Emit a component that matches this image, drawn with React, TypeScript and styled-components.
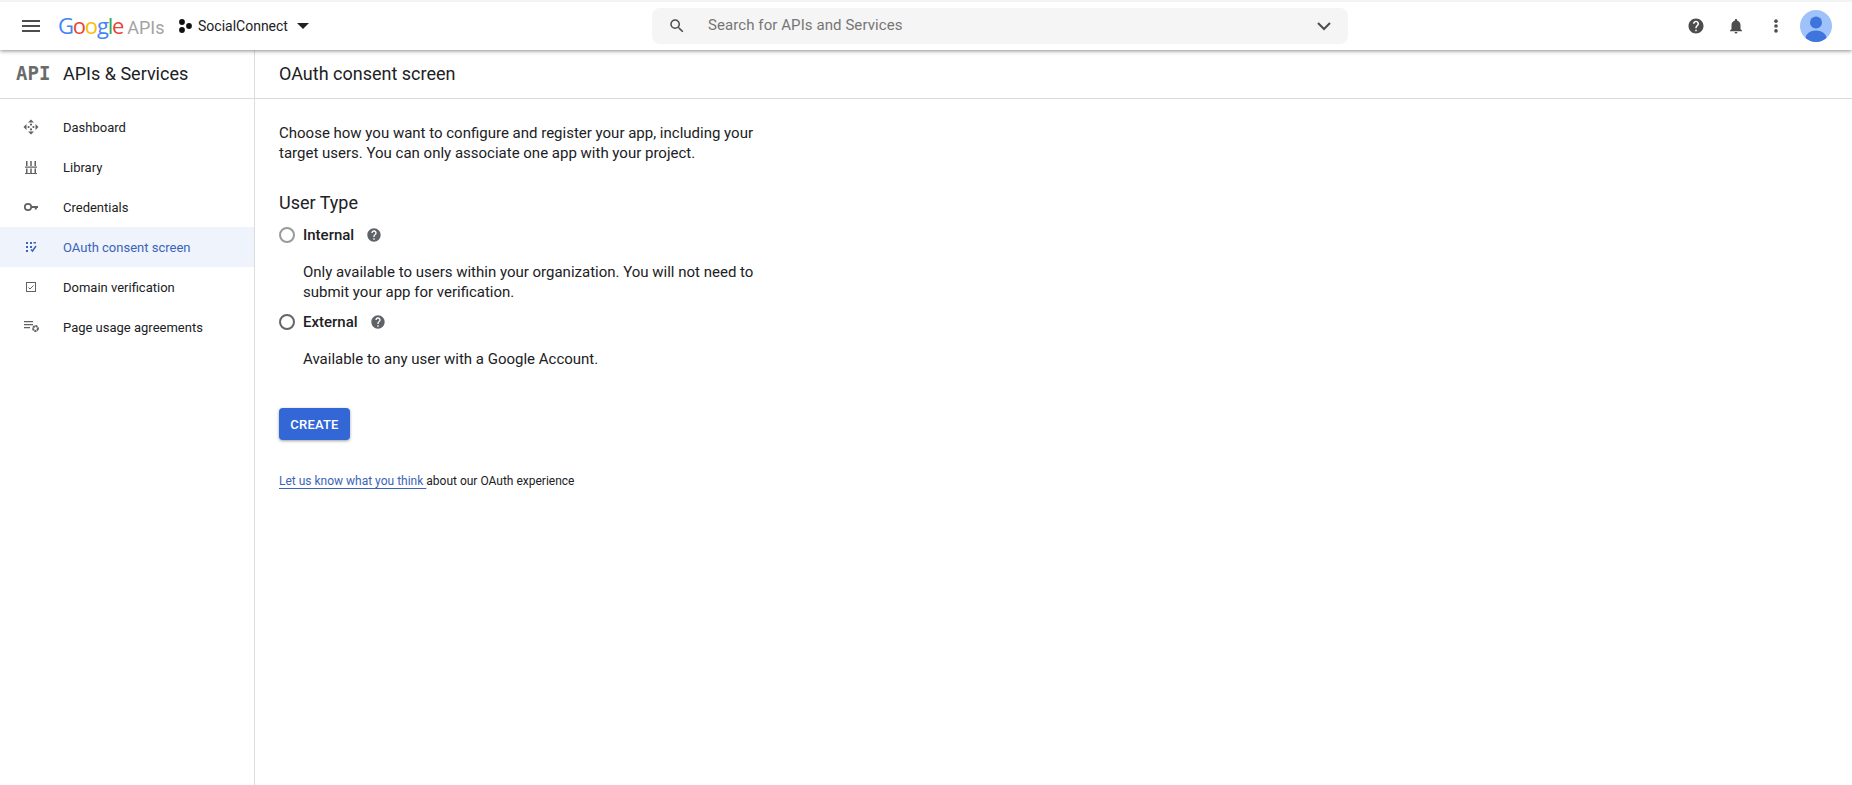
// App.tsx
import styled, { createGlobalStyle } from 'styled-components';

const GlobalStyle = createGlobalStyle`
  html, body {
    margin: 0;
    padding: 0;
    height: 100%;
    background: #fff;
    font-family: Roboto, "Liberation Sans", sans-serif;
    color: #202124;
  }
  #root {
    height: 100%;
  }
`;

const Page = styled.div`
  display: flex;
  flex-direction: column;
  height: 785px;
  overflow: hidden;
`;

const TopBar = styled.header`
  position: relative;
  z-index: 2;
  flex: none;
  display: grid;
  grid-template-columns: 652px 696px 1fr;
  align-items: center;
  height: 48px;
  border-top: 2px solid #f3f3f3;
  background: #fff;
  box-shadow: 0 1px 4px rgba(60, 64, 67, 0.6);
`;

const TopLeft = styled.div`
  display: flex;
  align-items: center;
  padding-left: 22px;
`;

const MenuButton = styled.svg`
  width: 18px;
  height: 12px;
  margin-right: 18px;
  color: #4d4d4d;
`;

const Logo = styled.div`
  display: flex;
  align-items: baseline;
  width: 120px;
  font-family: "Open Sans", Roboto, sans-serif;
  font-size: 22px;
  letter-spacing: -1.2px;
  line-height: 26px;
`;

const LogoLetter = styled.span<{ $color: string }>`
  color: ${({ $color }) => $color};
`;

const LogoApis = styled.span`
  margin-left: 4px;
  font-family: Roboto, sans-serif;
  font-size: 18px;
  letter-spacing: 0;
  color: #a3a3a3;
`;

const ProjectName = styled.span`
  margin-left: 6px;
  font-size: 14px;
  color: #202124;
`;

const Caret = styled.svg`
  width: 12px;
  height: 6px;
  margin-left: 9px;
  color: #202124;
`;

const SearchBox = styled.div`
  display: flex;
  align-items: center;
  height: 36px;
  padding: 0 12px 0 16px;
  border-radius: 8px;
  background: #f5f5f5;
  font-size: 15px;
  letter-spacing: 0.08px;
  color: #757575;
`;

const SearchText = styled.span`
  flex: 1;
  margin-left: 22px;
  padding-bottom: 2px;
`;

const TopRight = styled.div`
  display: flex;
  align-items: center;
  justify-content: flex-end;
  padding-right: 20px;
`;

const IconSlot = styled.span`
  display: flex;
  align-items: center;
  justify-content: center;
  width: 40px;
`;

const Avatar = styled.svg`
  flex: none;
  width: 32px;
  height: 32px;
  margin-left: 4px;
`;

const Body = styled.div`
  flex: 1;
  display: grid;
  grid-template-columns: 255px 1fr;
  min-height: 0;
`;

const Sidebar = styled.aside`
  border-right: 1px solid #dadce0;
`;

const SidebarHead = styled.div`
  box-sizing: border-box;
  display: flex;
  align-items: center;
  height: 49px;
  padding: 0 0 2px 16px;
  border-bottom: 1px solid #dadce0;
  font-size: 18px;
  color: #202124;
`;

const ApiMark = styled.span`
  width: 47px;
  font-family: "DejaVu Sans Mono", "Liberation Mono", monospace;
  font-size: 19px;
  font-weight: 700;
  color: #6b6b6b;
`;

const Nav = styled.nav`
  display: flex;
  flex-direction: column;
  padding-top: 8px;
`;

const NavItem = styled.a<{ $active?: boolean }>`
  display: flex;
  align-items: center;
  height: 40px;
  padding-left: 22px;
  font-size: 13px;
  color: ${({ $active }) => ($active ? '#3b64b8' : '#202124')};
  background: ${({ $active }) => ($active ? '#eef3fc' : 'transparent')};
`;

const NavIcon = styled.svg`
  flex: none;
  width: 18px;
  height: 18px;
  margin-right: 23px;
  color: #616161;
`;

const Main = styled.main`
  display: flex;
  flex-direction: column;
`;

const MainHead = styled.div`
  box-sizing: border-box;
  display: flex;
  align-items: center;
  flex: none;
  height: 49px;
  padding: 0 0 2px 24px;
  font-size: 18px;
  border-bottom: 1px solid #dadce0;
`;

const Content = styled.div`
  width: 480px;
  padding: 24px 0 0 24px;
`;

const Paragraph = styled.p`
  margin: 0;
  font-size: 15px;
  line-height: 20px;
  color: #202124;
`;

const SectionTitle = styled.h2`
  margin: 28px 0 0;
  font-size: 18px;
  font-weight: 400;
  line-height: 24px;
  color: #202124;
`;

const OptionRow = styled.div<{ $gap: number }>`
  display: flex;
  align-items: center;
  height: 24px;
  margin-top: ${({ $gap }) => $gap}px;
`;

const Radio = styled.span<{ $muted?: boolean }>`
  flex: none;
  box-sizing: border-box;
  width: 16px;
  height: 16px;
  margin-right: 8px;
  border: 2px solid ${({ $muted }) => ($muted ? '#9a9a9a' : '#666')};
  border-radius: 50%;
`;

const OptionLabel = styled.span`
  margin-right: 12px;
  font-size: 15px;
  font-weight: 500;
  color: #202124;
`;

const OptionText = styled(Paragraph)`
  margin-top: 15px;
  padding-left: 24px;
`;

const CreateButton = styled.button`
  display: block;
  width: 71px;
  height: 32px;
  margin-top: 39px;
  padding: 0;
  border: none;
  border-radius: 4px;
  background: #3367d6;
  box-shadow: 0 1px 3px rgba(60, 64, 67, 0.5);
  color: #fff;
  font-family: Roboto, sans-serif;
  font-size: 13px;
  font-weight: 500;
  letter-spacing: 0.2px;
`;

const Feedback = styled.p`
  margin: 33px 0 0;
  font-size: 12px;
  line-height: 16px;
  color: #202124;
`;

const FeedbackLink = styled.a`
  color: #3b64b8;
  text-decoration: underline;
  text-underline-offset: 3px;
`;

const Icon = styled.svg<{ $size: number; $color?: string }>`
  flex: none;
  display: block;
  width: ${({ $size }) => $size}px;
  height: ${({ $size }) => $size}px;
  color: ${({ $color }) => $color ?? '#5f6368'};
`;

const HelpIcon = ({ size, color }: { size: number; color?: string }) => (
  <Icon $size={size} $color={color} viewBox="0 0 24 24" fill="currentColor">
    <path d="M12 2C6.48 2 2 6.48 2 12s4.48 10 10 10 10-4.48 10-10S17.52 2 12 2zm1 17h-2v-2h2v2zm2.07-7.75l-.9.92C13.45 12.9 13 13.5 13 15h-2v-.5c0-1.1.45-2.1 1.17-2.83l1.24-1.26c.37-.36.59-.86.59-1.41 0-1.1-.9-2-2-2s-2 .9-2 2H8c0-2.21 1.79-4 4-4s4 1.79 4 4c0 .88-.36 1.68-.93 2.25z" />
  </Icon>
);

const LOGO_LETTERS: [string, string][] = [
  ['G', '#4285f4'],
  ['o', '#ea4335'],
  ['o', '#fbbc05'],
  ['g', '#4285f4'],
  ['l', '#34a853'],
  ['e', '#ea4335'],
];

const App = () => {
  return (
    <Page>
      <GlobalStyle />
      <TopBar>
        <TopLeft>
          <MenuButton viewBox="0 0 18 12" fill="currentColor">
            <rect width="18" height="2" />
            <rect y="5" width="18" height="2" />
            <rect y="10" width="18" height="2" />
          </MenuButton>
          <Logo>
            {LOGO_LETTERS.map(([letter, color], i) => (
              <LogoLetter key={i} $color={color}>{letter}</LogoLetter>
            ))}
            <LogoApis>APIs</LogoApis>
          </Logo>
          <Icon $size={14} $color="#111" viewBox="0 0 14 14" fill="currentColor">
            <circle cx="4" cy="3" r="2.9" />
            <circle cx="4" cy="11" r="2.9" />
            <circle cx="11" cy="7" r="2.9" />
          </Icon>
          <ProjectName>SocialConnect</ProjectName>
          <Caret viewBox="0 0 12 6" fill="currentColor">
            <path d="M0 0h12L6 6z" />
          </Caret>
        </TopLeft>
        <SearchBox>
          <Icon $size={18} $color="#4d4d4d" viewBox="0 0 24 24" fill="currentColor">
            <path d="M15.5 14h-.79l-.28-.27A6.47 6.47 0 0 0 16 9.5 6.5 6.5 0 1 0 9.5 16c1.61 0 3.09-.59 4.23-1.57l.27.28v.79l5 4.99L20.49 19l-4.99-5zm-6 0C7.01 14 5 11.99 5 9.5S7.01 5 9.5 5 14 7.01 14 9.5 11.99 14 9.5 14z" />
          </Icon>
          <SearchText>Search for APIs and Services</SearchText>
          <Icon $size={24} $color="#4d4d4d" viewBox="0 0 24 24" fill="none">
            <path d="M6 9l6 6 6-6" stroke="currentColor" strokeWidth="2" />
          </Icon>
        </SearchBox>
        <TopRight>
          <IconSlot>
            <HelpIcon size={18} color="#4d4d4d" />
          </IconSlot>
          <IconSlot>
            <Icon $size={18} $color="#4d4d4d" viewBox="0 0 24 24" fill="currentColor">
              <path d="M12 22c1.1 0 2-.9 2-2h-4c0 1.1.9 2 2 2zm6-6v-5c0-3.07-1.63-5.64-4.5-6.32V4c0-.83-.67-1.5-1.5-1.5s-1.5.67-1.5 1.5v.68C7.64 5.36 6 7.92 6 11v5l-2 2v1h16v-1l-2-2z" />
            </Icon>
          </IconSlot>
          <IconSlot>
            <Icon $size={18} $color="#4d4d4d" viewBox="0 0 24 24" fill="currentColor">
              <circle cx="12" cy="5.5" r="2.4" />
              <circle cx="12" cy="12" r="2.4" />
              <circle cx="12" cy="18.5" r="2.4" />
            </Icon>
          </IconSlot>
          <Avatar viewBox="0 0 32 32">
            <defs>
              <clipPath id="avatar-clip">
                <circle cx="16" cy="16" r="16" />
              </clipPath>
            </defs>
            <circle cx="16" cy="16" r="16" fill="#a0c2fa" />
            <g clipPath="url(#avatar-clip)" fill="#3f74dc">
              <circle cx="16" cy="12.5" r="6" />
              <ellipse cx="16" cy="28" rx="10.5" ry="7.5" />
            </g>
          </Avatar>
        </TopRight>
      </TopBar>
      <Body>
        <Sidebar>
          <SidebarHead>
            <ApiMark>API</ApiMark>
            APIs &amp; Services
          </SidebarHead>
          <Nav>
            <NavItem>
              <NavIcon viewBox="0 0 18 18" fill="currentColor">
                <path d="M9 1.500l3 3H6zM9 16.500l-3-3h6zM1.500 9l3-3v6zM16.500 9l-3 3V6z" />
                <circle cx="9" cy="6.600" r="1.100" />
                <circle cx="9" cy="11.400" r="1.100" />
                <circle cx="6.600" cy="9" r="1.100" />
                <circle cx="11.400" cy="9" r="1.100" />
              </NavIcon>
              Dashboard
            </NavItem>
            <NavItem>
              <NavIcon viewBox="0 0 18 18" fill="currentColor">
                <path d="M4 3h1.500v5H4zM8.250 3h1.500v5h-1.500zM12.500 3H14v5h-1.500zM3 8.500h12V9.800H3zM4 10.500h1.500v4.500H4zM8.250 10.500h1.500v4.500h-1.500zM12.500 10.500H14v4.500h-1.500zM3 15h12v1H3z" />
              </NavIcon>
              Library
            </NavItem>
            <NavItem>
              <NavIcon viewBox="0 0 18 18" fill="none">
                <circle cx="6" cy="9" r="3.200" stroke="currentColor" strokeWidth="1.700" />
                <path d="M9 8h7v2h-1.200v1.500h-2V10H9z" fill="currentColor" />
              </NavIcon>
              Credentials
            </NavItem>
            <NavItem $active>
              <NavIcon viewBox="0 0 18 18" fill="#3b64b8">
                <path d="M4 4h2v2H4zM8 4h2v2H8zM4 8h2v2H4zM8 8h2v2H8zM4 12h2v2H4zM11.500 4H14v1.500h-2.500z" />
                <path d="M9 11.500l1.500 1.500 3.500-5" fill="none" stroke="#3b64b8" strokeWidth="1.500" />
              </NavIcon>
              OAuth consent screen
            </NavItem>
            <NavItem>
              <NavIcon viewBox="0 0 18 18" fill="none">
                <rect x="4.500" y="4.500" width="9" height="9" stroke="currentColor" />
                <path d="M6.500 9.500l1.500 1.500 3.500-3.500" stroke="currentColor" />
              </NavIcon>
              Domain verification
            </NavItem>
            <NavItem>
              <NavIcon viewBox="0 0 18 18" fill="currentColor">
                <path d="M2 3h9v1.200H2zM2 6h9v1.200H2zM2 9h6v1.200H2z" />
                <circle cx="13.500" cy="10.500" r="2.400" fill="none" stroke="currentColor" strokeWidth="2" strokeDasharray="2 0.500" />
              </NavIcon>
              Page usage agreements
            </NavItem>
          </Nav>
        </Sidebar>
        <Main>
          <MainHead>OAuth consent screen</MainHead>
          <Content>
            <Paragraph>
              Choose how you want to configure and register your app, including your target users. You can only associate one app with your project.
            </Paragraph>
            <SectionTitle>User Type</SectionTitle>
            <OptionRow $gap={8}>
              <Radio $muted />
              <OptionLabel>Internal</OptionLabel>
              <HelpIcon size={16} />
            </OptionRow>
            <OptionText>
              Only available to users within your organization. You will not need to submit your app for verification.
            </OptionText>
            <OptionRow $gap={8}>
              <Radio />
              <OptionLabel>External</OptionLabel>
              <HelpIcon size={16} />
            </OptionRow>
            <OptionText>Available to any user with a Google Account.</OptionText>
            <CreateButton>CREATE</CreateButton>
            <Feedback>
              <FeedbackLink>Let us know what you think </FeedbackLink>about our OAuth experience
            </Feedback>
          </Content>
        </Main>
      </Body>
    </Page>
  );
};

export default App;
